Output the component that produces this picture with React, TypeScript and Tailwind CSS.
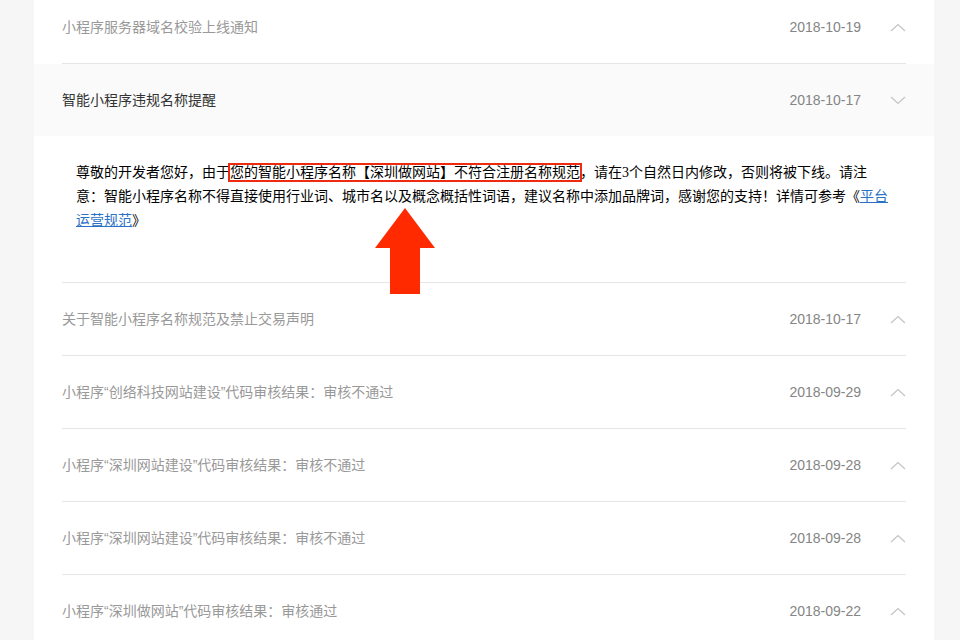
import React from "react";

type Notice = { title: string; date: string; open?: boolean };

const NOTICES: Notice[] = [
  { title: "小程序服务器域名校验上线通知", date: "2018-10-19" },
  { title: "智能小程序违规名称提醒", date: "2018-10-17", open: true },
  { title: "关于智能小程序名称规范及禁止交易声明", date: "2018-10-17" },
  { title: "小程序“创络科技网站建设”代码审核结果：审核不通过", date: "2018-09-29" },
  { title: "小程序“深圳网站建设”代码审核结果：审核不通过", date: "2018-09-28" },
  { title: "小程序“深圳网站建设”代码审核结果：审核不通过", date: "2018-09-28" },
  { title: "小程序“深圳做网站”代码审核结果：审核通过", date: "2018-09-22" },
];

function Chevron({ up }: { up: boolean }) {
  return (
    <svg width="16" height="9" viewBox="0 0 16 9" className="ml-[29px] shrink-0">
      <path
        d={up ? "M1 8 L8 1.5 L15 8" : "M1 1 L8 7.5 L15 1"}
        fill="none"
        stroke="#c4c4c4"
        strokeWidth="1.2"
      />
    </svg>
  );
}

function RowHead({ n }: { n: Notice }) {
  return (
    <div className="flex h-[72px] items-center">
      <div
        className={
          "flex-1 text-[14px] " + (n.open ? "text-[#333]" : "text-[#999]")
        }
      >
        {n.title}
      </div>
      <div className="text-[14px] text-[#858585]">{n.date}</div>
      <Chevron up={!n.open} />
    </div>
  );
}

function Arrow() {
  return (
    <svg
      width="62"
      height="88"
      viewBox="0 0 62 88"
      className="absolute left-[312px] top-[72px]"
    >
      <path d="M31 0 L61 40 L46 40 L46 86 L16 86 L16 40 L1 40 Z" fill="#ff2a00" />
    </svg>
  );
}

export default function App() {
  return (
    <div
      className="h-[640px] w-[960px] overflow-hidden bg-[#f6f6f6]"
      style={{ fontFamily: '"Liberation Sans", "Noto Sans CJK SC", sans-serif' }}
    >
      <div className="-mt-[9px] ml-[34px] w-[900px] bg-white">
        {NOTICES.map((n, i) =>
          n.open ? (
            <div key={i}>
              <div className="bg-[#fafafa] px-[28px]">
                <RowHead n={n} />
              </div>
              <div className="mx-[28px] border-b border-[#e6e6e6]">
                <div
                  className="relative pb-[49px] pl-[14px] pr-[16px] pt-[25px] text-[14px] leading-[24px] text-black"
                  style={{
                    fontFamily:
                      '"Liberation Serif", "Noto Sans CJK SC", serif',
                  }}
                >
                  尊敬的开发者您好，由于
                  <span className="outline-2 outline-[#ee2a10]">
                    您的智能小程序名称【深圳做网站】不符合注册名称规范
                  </span>
                  ，请在3个自然日内修改，否则将被下线。请注意：智能小程序名称不得直接使用行业词、城市名以及概念概括性词语，建议名称中添加品牌词，感谢您的支持！详情可参考《
                  <a href="#" className="text-[#2a72c6] underline">
                    平台运营规范
                  </a>
                  》
                  <Arrow />
                </div>
              </div>
            </div>
          ) : (
            <div key={i} className="mx-[28px] border-b border-[#e6e6e6]">
              <RowHead n={n} />
            </div>
          )
        )}
      </div>
    </div>
  );
}
